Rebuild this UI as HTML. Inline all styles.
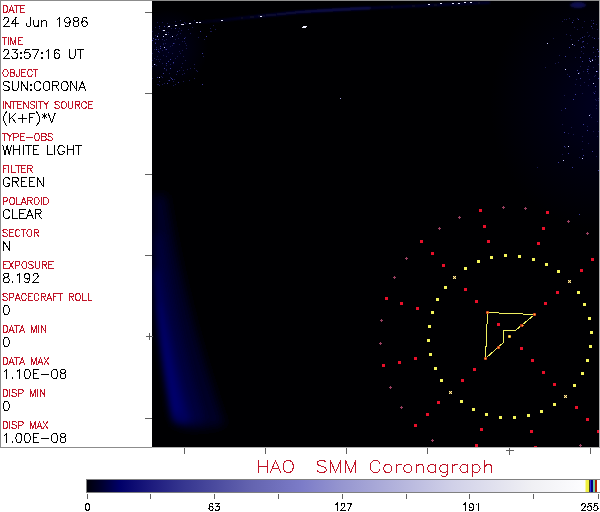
<!DOCTYPE html>
<html><head><meta charset="utf-8"><style>
html,body{margin:0;padding:0;background:#fff;width:600px;height:512px;overflow:hidden}
svg{display:block}
text{font-family:"Liberation Sans",sans-serif}
</style></head><body>
<svg width="600" height="512" viewBox="0 0 600 512" shape-rendering="crispEdges">

<defs>


<radialGradient id="rgL"><stop offset="0" stop-color="#00001e"/><stop offset="1" stop-color="#000002"/></radialGradient>
<radialGradient id="rgR"><stop offset="0" stop-color="#000020"/><stop offset="0.5" stop-color="#00000e"/><stop offset="1" stop-color="#000002"/></radialGradient>



<clipPath id="imgclip"><rect x="152" y="1" width="447" height="446"/></clipPath>
<filter id="blurS" filterUnits="userSpaceOnUse" x="152" y="1" width="447" height="446"><feGaussianBlur stdDeviation="3"/></filter>

<linearGradient id="cbar" x1="0" x2="1" y1="0" y2="0">
  <stop offset="0" stop-color="#00000a"/>
  <stop offset="0.03" stop-color="#000030"/>
  <stop offset="0.066" stop-color="#000069"/>
  <stop offset="0.127" stop-color="#1c1a7d"/>
  <stop offset="0.191" stop-color="#35358f"/>
  <stop offset="0.331" stop-color="#6464b0"/>
  <stop offset="0.432" stop-color="#7c7cc8"/>
  <stop offset="0.512" stop-color="#9696d0"/>
  <stop offset="0.733" stop-color="#d0d0e8"/>
  <stop offset="0.894" stop-color="#f0f0f4"/>
  <stop offset="1.0" stop-color="#fdfdff"/>
</linearGradient>
<filter id="blur1" filterUnits="userSpaceOnUse" x="152" y="1" width="447" height="446"><feGaussianBlur stdDeviation="1.2"/></filter>
<filter id="blurH" filterUnits="userSpaceOnUse" x="152" y="1" width="447" height="446"><feGaussianBlur stdDeviation="5"/></filter>
</defs>
<rect x="0" y="0" width="600" height="512" fill="#ffffff" />
<rect x="152" y="1" width="447" height="446" fill="#000002" />
<g shape-rendering="geometricPrecision" clip-path="url(#imgclip)">
<ellipse cx="168" cy="48" rx="40" ry="40" fill="url(#rgL)"/>
<ellipse cx="600" cy="105" rx="110" ry="125" fill="url(#rgR)"/>
</g>
<g shape-rendering="geometricPrecision" filter="url(#blurH)">
<path d="M152.0,195.0 152.0,200.0 152.0,205.0 152.1,210.0 152.2,215.0 152.3,220.0 152.4,225.0 152.5,230.0 152.7,235.0 152.8,240.0 153.0,245.0 153.3,250.0 153.5,255.0 153.8,260.0 154.0,265.0 154.3,270.0 154.7,275.0 155.0,280.0 155.4,285.0 155.8,290.0 156.2,295.0 156.6,300.0 157.0,305.0 157.5,310.0 158.0,315.0 158.5,320.0 159.0,325.0 159.6,330.0 160.2,335.0 160.7,340.0 161.4,345.0 162.0,350.0 162.6,355.0 163.3,360.0 164.0,365.0 164.7,370.0 165.5,375.0 166.2,380.0 167.0,385.0 167.8,390.0 168.6,395.0 169.5,400.0 170.3,405.0 171.2,410.0 172.1,415.0 173.1,420.0 174.0,425.0 199.7,429.0 224.8,425.0 223.1,420.0 221.3,415.0 219.6,410.0 217.9,405.0 216.3,400.0 214.6,395.0 213.0,390.0 211.4,385.0 209.8,380.0 208.3,375.0 206.7,370.0 205.2,365.0 203.7,360.0 202.2,355.0 200.8,350.0 199.4,345.0 197.9,340.0 196.6,335.0 195.2,330.0 193.8,325.0 192.5,320.0 191.2,315.0 189.9,310.0 188.6,305.0 187.4,300.0 186.2,295.0 185.0,290.0 183.8,285.0 182.6,280.0 181.5,275.0 180.3,270.0 179.2,265.0 178.2,260.0 177.1,255.0 176.1,250.0 175.0,245.0 174.0,240.0 173.1,235.0 172.1,230.0 171.2,225.0 170.3,220.0 169.4,215.0 168.5,210.0 167.6,205.0 166.8,200.0 166.0,195.0Z" fill="#000028" opacity="1"/>
<path d="M152.7,235.0 152.8,240.0 153.0,245.0 153.3,250.0 153.5,255.0 153.8,260.0 154.0,265.0 154.3,270.0 154.7,275.0 155.0,280.0 155.4,285.0 155.8,290.0 156.2,295.0 156.6,300.0 157.0,305.0 157.5,310.0 158.0,315.0 158.5,320.0 159.0,325.0 159.6,330.0 160.2,335.0 160.7,340.0 161.4,345.0 162.0,350.0 162.6,355.0 163.3,360.0 164.0,365.0 164.7,370.0 165.5,375.0 166.2,380.0 167.0,385.0 167.8,390.0 168.6,395.0 169.5,400.0 170.3,405.0 171.2,410.0 172.1,415.0 173.1,420.0 189.1,427.0 203.3,420.0 201.7,415.0 200.2,410.0 198.7,405.0 197.3,400.0 195.8,395.0 194.4,390.0 193.0,385.0 191.6,380.0 190.3,375.0 188.9,370.0 187.6,365.0 186.3,360.0 185.0,355.0 183.8,350.0 182.6,345.0 181.3,340.0 180.2,335.0 179.0,330.0 177.8,325.0 176.7,320.0 175.6,315.0 174.5,310.0 173.4,305.0 172.4,300.0 171.4,295.0 170.4,290.0 169.4,285.0 168.4,280.0 167.5,275.0 166.5,270.0 165.6,265.0 164.8,260.0 163.9,255.0 163.1,250.0 162.2,245.0 161.4,240.0 160.7,235.0Z" fill="#000040" opacity="1"/>
</g>
<g shape-rendering="geometricPrecision" filter="url(#blurS)">
<path d="M154.3,270.0 154.7,275.0 155.0,280.0 155.4,285.0 155.8,290.0 156.2,295.0 156.6,300.0 157.0,305.0 157.5,310.0 158.0,315.0 158.5,320.0 159.0,325.0 159.6,330.0 160.2,335.0 160.7,340.0 161.4,345.0 162.0,350.0 162.6,355.0 163.3,360.0 164.0,365.0 164.7,370.0 165.5,375.0 166.2,380.0 167.0,385.0 167.8,390.0 168.6,395.0 169.5,400.0 170.3,405.0 171.2,410.0 172.1,415.0 173.1,420.0 181.8,423.0 190.6,420.0 189.2,415.0 187.8,410.0 186.5,405.0 185.2,400.0 183.9,395.0 182.6,390.0 181.4,385.0 180.1,380.0 178.9,375.0 177.7,370.0 176.6,365.0 175.4,360.0 174.3,355.0 173.2,350.0 172.1,345.0 171.0,340.0 170.0,335.0 169.0,330.0 168.0,325.0 167.0,320.0 166.0,315.0 165.1,310.0 164.2,305.0 163.3,300.0 162.4,295.0 161.6,290.0 160.7,285.0 159.9,280.0 159.1,275.0 158.3,270.0Z" fill="#00005c" opacity="1"/>
<path d="M157.0,305.0 157.5,310.0 158.0,315.0 158.5,320.0 159.0,325.0 159.6,330.0 160.2,335.0 160.7,340.0 161.4,345.0 162.0,350.0 162.6,355.0 163.3,360.0 164.0,365.0 164.7,370.0 165.5,375.0 166.2,380.0 167.0,385.0 167.8,390.0 168.6,395.0 169.5,400.0 170.3,405.0 171.2,410.0 176.3,415.0 180.5,410.0 179.3,405.0 178.2,400.0 177.0,395.0 175.9,390.0 174.8,385.0 173.7,380.0 172.7,375.0 171.6,370.0 170.6,365.0 169.6,360.0 168.6,355.0 167.7,350.0 166.8,345.0 165.8,340.0 165.0,335.0 164.1,330.0 163.2,325.0 162.4,320.0 161.6,315.0 160.8,310.0 160.0,305.0Z" fill="#00006e" opacity="1"/>
</g>
<g filter="url(#blurH)" shape-rendering="geometricPrecision">
</g>
<g shape-rendering="geometricPrecision" filter="url(#blur1)">
<defs><linearGradient id="stk" gradientUnits="userSpaceOnUse" x1="180" y1="0" x2="320" y2="0"><stop offset="0" stop-color="#000010"/><stop offset="1" stop-color="#12126e"/></linearGradient></defs>
<path d="M170,25 C210,21.5 250,17 300,12 C330,10 350,9 370,8" stroke="url(#stk)" stroke-width="1.8" fill="none"/>
<path d="M370,8 C400,6.5 440,4.5 490,2.5" stroke="#0a0a48" stroke-width="1.6" fill="none"/>
<ellipse cx="578" cy="5" rx="8" ry="3" fill="#0c0c50"/>
</g>
<rect x="159" y="26" width="1" height="1" fill="#3a3a9a"/>
<rect x="166" y="32" width="1" height="1" fill="#18184e"/>
<rect x="183" y="24" width="1" height="1" fill="#3a3a9a"/>
<rect x="163" y="73" width="1" height="1" fill="#3a3a9a"/>
<rect x="176" y="35" width="1" height="1" fill="#18184e"/>
<rect x="167" y="27" width="1" height="1" fill="#18184e"/>
<rect x="213" y="25" width="1" height="1" fill="#18184e"/>
<rect x="198" y="37" width="1" height="1" fill="#18184e"/>
<rect x="160" y="59" width="1" height="1" fill="#18184e"/>
<rect x="163" y="43" width="1" height="1" fill="#3a3a9a"/>
<rect x="168" y="32" width="1" height="1" fill="#18184e"/>
<rect x="159" y="28" width="1" height="1" fill="#18184e"/>
<rect x="176" y="74" width="1" height="1" fill="#18184e"/>
<rect x="174" y="79" width="1" height="1" fill="#18184e"/>
<rect x="174" y="43" width="1" height="1" fill="#18184e"/>
<rect x="158" y="51" width="1" height="1" fill="#3a3a9a"/>
<rect x="162" y="63" width="1" height="1" fill="#18184e"/>
<rect x="183" y="56" width="1" height="1" fill="#18184e"/>
<rect x="182" y="41" width="1" height="1" fill="#18184e"/>
<rect x="166" y="39" width="1" height="1" fill="#18184e"/>
<rect x="215" y="29" width="1" height="1" fill="#18184e"/>
<rect x="185" y="60" width="1" height="1" fill="#18184e"/>
<rect x="171" y="78" width="1" height="1" fill="#3a3a9a"/>
<rect x="178" y="31" width="1" height="1" fill="#18184e"/>
<rect x="192" y="27" width="1" height="1" fill="#18184e"/>
<rect x="158" y="59" width="1" height="1" fill="#18184e"/>
<rect x="203" y="56" width="1" height="1" fill="#18184e"/>
<rect x="154" y="64" width="1" height="1" fill="#c8c8ff"/>
<rect x="168" y="34" width="1" height="1" fill="#18184e"/>
<rect x="156" y="47" width="1" height="1" fill="#18184e"/>
<rect x="166" y="70" width="1" height="1" fill="#18184e"/>
<rect x="167" y="83" width="1" height="1" fill="#3a3a9a"/>
<rect x="185" y="37" width="1" height="1" fill="#18184e"/>
<rect x="163" y="55" width="1" height="1" fill="#18184e"/>
<rect x="194" y="68" width="1" height="1" fill="#18184e"/>
<rect x="155" y="39" width="1" height="1" fill="#3a3a9a"/>
<rect x="175" y="21" width="1" height="1" fill="#18184e"/>
<rect x="185" y="43" width="1" height="1" fill="#18184e"/>
<rect x="181" y="67" width="1" height="1" fill="#18184e"/>
<rect x="152" y="60" width="1" height="1" fill="#18184e"/>
<rect x="164" y="26" width="1" height="1" fill="#18184e"/>
<rect x="183" y="70" width="1" height="1" fill="#18184e"/>
<rect x="177" y="71" width="1" height="1" fill="#3a3a9a"/>
<rect x="171" y="28" width="1" height="1" fill="#18184e"/>
<rect x="164" y="26" width="1" height="1" fill="#3a3a9a"/>
<rect x="156" y="39" width="1" height="1" fill="#18184e"/>
<rect x="188" y="29" width="1" height="1" fill="#18184e"/>
<rect x="164" y="68" width="1" height="1" fill="#3a3a9a"/>
<rect x="152" y="66" width="1" height="1" fill="#18184e"/>
<rect x="177" y="34" width="1" height="1" fill="#18184e"/>
<rect x="183" y="81" width="1" height="1" fill="#18184e"/>
<rect x="153" y="38" width="1" height="1" fill="#3a3a9a"/>
<rect x="164" y="40" width="1" height="1" fill="#18184e"/>
<rect x="170" y="46" width="1" height="1" fill="#18184e"/>
<rect x="167" y="23" width="1" height="1" fill="#18184e"/>
<rect x="154" y="58" width="1" height="1" fill="#18184e"/>
<rect x="180" y="53" width="1" height="1" fill="#18184e"/>
<rect x="184" y="41" width="1" height="1" fill="#18184e"/>
<rect x="157" y="84" width="1" height="1" fill="#18184e"/>
<rect x="186" y="48" width="1" height="1" fill="#18184e"/>
<rect x="163" y="44" width="1" height="1" fill="#18184e"/>
<rect x="197" y="71" width="1" height="1" fill="#18184e"/>
<rect x="156" y="65" width="1" height="1" fill="#18184e"/>
<rect x="185" y="23" width="1" height="1" fill="#18184e"/>
<rect x="170" y="64" width="1" height="1" fill="#18184e"/>
<rect x="155" y="64" width="1" height="1" fill="#18184e"/>
<rect x="165" y="49" width="1" height="1" fill="#18184e"/>
<rect x="166" y="63" width="1" height="1" fill="#3a3a9a"/>
<rect x="194" y="20" width="1" height="1" fill="#18184e"/>
<rect x="194" y="64" width="1" height="1" fill="#18184e"/>
<rect x="187" y="69" width="1" height="1" fill="#18184e"/>
<rect x="172" y="45" width="1" height="1" fill="#18184e"/>
<rect x="173" y="62" width="1" height="1" fill="#3a3a9a"/>
<rect x="196" y="70" width="1" height="1" fill="#18184e"/>
<rect x="152" y="40" width="1" height="1" fill="#3a3a9a"/>
<rect x="163" y="36" width="1" height="1" fill="#c8c8ff"/>
<rect x="178" y="38" width="1" height="1" fill="#18184e"/>
<rect x="168" y="80" width="1" height="1" fill="#18184e"/>
<rect x="172" y="36" width="1" height="1" fill="#c8c8ff"/>
<rect x="180" y="33" width="1" height="1" fill="#18184e"/>
<rect x="179" y="44" width="1" height="1" fill="#18184e"/>
<rect x="164" y="47" width="1" height="1" fill="#c8c8ff"/>
<rect x="159" y="61" width="1" height="1" fill="#18184e"/>
<rect x="184" y="73" width="1" height="1" fill="#18184e"/>
<rect x="194" y="78" width="1" height="1" fill="#18184e"/>
<rect x="169" y="73" width="1" height="1" fill="#18184e"/>
<rect x="162" y="39" width="1" height="1" fill="#18184e"/>
<rect x="162" y="22" width="1" height="1" fill="#18184e"/>
<rect x="158" y="39" width="1" height="1" fill="#3a3a9a"/>
<rect x="189" y="80" width="1" height="1" fill="#18184e"/>
<rect x="159" y="81" width="1" height="1" fill="#18184e"/>
<rect x="158" y="33" width="1" height="1" fill="#18184e"/>
<rect x="169" y="25" width="1" height="1" fill="#18184e"/>
<rect x="158" y="84" width="1" height="1" fill="#18184e"/>
<rect x="210" y="28" width="1" height="1" fill="#18184e"/>
<rect x="162" y="84" width="1" height="1" fill="#18184e"/>
<rect x="159" y="85" width="1" height="1" fill="#18184e"/>
<rect x="173" y="81" width="1" height="1" fill="#18184e"/>
<rect x="152" y="53" width="1" height="1" fill="#18184e"/>
<rect x="186" y="45" width="1" height="1" fill="#18184e"/>
<rect x="161" y="76" width="1" height="1" fill="#18184e"/>
<rect x="162" y="50" width="1" height="1" fill="#18184e"/>
<rect x="157" y="35" width="1" height="1" fill="#18184e"/>
<rect x="175" y="39" width="1" height="1" fill="#18184e"/>
<rect x="168" y="52" width="1" height="1" fill="#18184e"/>
<rect x="172" y="79" width="1" height="1" fill="#3a3a9a"/>
<rect x="178" y="82" width="1" height="1" fill="#3a3a9a"/>
<rect x="160" y="48" width="1" height="1" fill="#3a3a9a"/>
<rect x="182" y="63" width="1" height="1" fill="#18184e"/>
<rect x="166" y="65" width="1" height="1" fill="#18184e"/>
<rect x="152" y="78" width="1" height="1" fill="#18184e"/>
<rect x="157" y="22" width="1" height="1" fill="#18184e"/>
<rect x="175" y="28" width="1" height="1" fill="#3a3a9a"/>
<rect x="154" y="49" width="1" height="1" fill="#18184e"/>
<rect x="169" y="25" width="1" height="1" fill="#18184e"/>
<rect x="165" y="43" width="1" height="1" fill="#18184e"/>
<rect x="172" y="53" width="1" height="1" fill="#18184e"/>
<rect x="173" y="85" width="1" height="1" fill="#18184e"/>
<rect x="155" y="27" width="1" height="1" fill="#18184e"/>
<rect x="163" y="43" width="1" height="1" fill="#18184e"/>
<rect x="211" y="31" width="1" height="1" fill="#18184e"/>
<rect x="181" y="30" width="1" height="1" fill="#18184e"/>
<rect x="155" y="35" width="1" height="1" fill="#18184e"/>
<rect x="173" y="63" width="1" height="1" fill="#18184e"/>
<rect x="206" y="36" width="1" height="1" fill="#3a3a9a"/>
<rect x="182" y="50" width="1" height="1" fill="#18184e"/>
<rect x="173" y="43" width="1" height="1" fill="#3a3a9a"/>
<rect x="156" y="59" width="1" height="1" fill="#18184e"/>
<rect x="170" y="77" width="1" height="1" fill="#18184e"/>
<rect x="155" y="42" width="1" height="1" fill="#18184e"/>
<rect x="181" y="24" width="1" height="1" fill="#c8c8ff"/>
<rect x="169" y="80" width="1" height="1" fill="#3a3a9a"/>
<rect x="157" y="77" width="1" height="1" fill="#3a3a9a"/>
<rect x="164" y="83" width="1" height="1" fill="#18184e"/>
<rect x="179" y="70" width="1" height="1" fill="#18184e"/>
<rect x="158" y="49" width="1" height="1" fill="#18184e"/>
<rect x="170" y="37" width="1" height="1" fill="#18184e"/>
<rect x="157" y="36" width="1" height="1" fill="#c8c8ff"/>
<rect x="159" y="52" width="1" height="1" fill="#18184e"/>
<rect x="190" y="68" width="1" height="1" fill="#18184e"/>
<rect x="166" y="56" width="1" height="1" fill="#18184e"/>
<rect x="155" y="43" width="1" height="1" fill="#3a3a9a"/>
<rect x="159" y="77" width="1" height="1" fill="#c8c8ff"/>
<rect x="168" y="61" width="1" height="1" fill="#3a3a9a"/>
<rect x="170" y="59" width="1" height="1" fill="#3a3a9a"/>
<rect x="162" y="30" width="1" height="1" fill="#18184e"/>
<rect x="175" y="84" width="1" height="1" fill="#18184e"/>
<rect x="152" y="31" width="1" height="1" fill="#18184e"/>
<rect x="200" y="31" width="1" height="1" fill="#3a3a9a"/>
<rect x="175" y="58" width="1" height="1" fill="#18184e"/>
<rect x="166" y="49" width="1" height="1" fill="#3a3a9a"/>
<rect x="204" y="39" width="1" height="1" fill="#18184e"/>
<rect x="166" y="69" width="1" height="1" fill="#18184e"/>
<rect x="157" y="56" width="1" height="1" fill="#18184e"/>
<rect x="184" y="38" width="1" height="1" fill="#3a3a9a"/>
<rect x="182" y="74" width="1" height="1" fill="#18184e"/>
<rect x="202" y="84" width="1" height="1" fill="#3a3a9a"/>
<rect x="184" y="22" width="1" height="1" fill="#18184e"/>
<rect x="156" y="49" width="1" height="1" fill="#3a3a9a"/>
<rect x="190" y="33" width="1" height="1" fill="#18184e"/>
<rect x="162" y="77" width="1" height="1" fill="#18184e"/>
<rect x="179" y="51" width="1" height="1" fill="#18184e"/>
<rect x="180" y="20" width="1" height="1" fill="#18184e"/>
<rect x="210" y="31" width="1" height="1" fill="#18184e"/>
<rect x="179" y="28" width="1" height="1" fill="#18184e"/>
<rect x="202" y="53" width="1" height="1" fill="#3a3a9a"/>
<rect x="160" y="46" width="1" height="1" fill="#3a3a9a"/>
<rect x="170" y="68" width="1" height="1" fill="#3a3a9a"/>
<rect x="177" y="56" width="1" height="1" fill="#18184e"/>
<rect x="575" y="94" width="1" height="1" fill="#3a3a9a"/>
<rect x="588" y="66" width="1" height="1" fill="#18184e"/>
<rect x="589" y="115" width="1" height="1" fill="#c8c8ff"/>
<rect x="582" y="41" width="1" height="1" fill="#18184e"/>
<rect x="587" y="130" width="1" height="1" fill="#3a3a9a"/>
<rect x="574" y="27" width="1" height="1" fill="#18184e"/>
<rect x="564" y="132" width="1" height="1" fill="#3a3a9a"/>
<rect x="547" y="43" width="1" height="1" fill="#c8c8ff"/>
<rect x="559" y="55" width="1" height="1" fill="#18184e"/>
<rect x="582" y="37" width="1" height="1" fill="#3a3a9a"/>
<rect x="584" y="36" width="1" height="1" fill="#18184e"/>
<rect x="582" y="93" width="1" height="1" fill="#18184e"/>
<rect x="571" y="127" width="1" height="1" fill="#18184e"/>
<rect x="573" y="99" width="1" height="1" fill="#3a3a9a"/>
<rect x="578" y="73" width="1" height="1" fill="#c8c8ff"/>
<rect x="573" y="20" width="1" height="1" fill="#18184e"/>
<rect x="595" y="59" width="1" height="1" fill="#18184e"/>
<rect x="582" y="158" width="1" height="1" fill="#c8c8ff"/>
<rect x="598" y="170" width="1" height="1" fill="#3a3a9a"/>
<rect x="567" y="74" width="1" height="1" fill="#18184e"/>
<rect x="593" y="92" width="1" height="1" fill="#18184e"/>
<rect x="569" y="18" width="1" height="1" fill="#18184e"/>
<rect x="583" y="46" width="1" height="1" fill="#3a3a9a"/>
<rect x="565" y="108" width="1" height="1" fill="#3a3a9a"/>
<rect x="583" y="41" width="1" height="1" fill="#3a3a9a"/>
<rect x="584" y="21" width="1" height="1" fill="#18184e"/>
<rect x="555" y="63" width="1" height="1" fill="#18184e"/>
<rect x="565" y="147" width="1" height="1" fill="#18184e"/>
<rect x="565" y="56" width="1" height="1" fill="#3a3a9a"/>
<rect x="596" y="105" width="1" height="1" fill="#18184e"/>
<rect x="587" y="69" width="1" height="1" fill="#3a3a9a"/>
<rect x="588" y="36" width="1" height="1" fill="#18184e"/>
<rect x="588" y="73" width="1" height="1" fill="#18184e"/>
<rect x="582" y="27" width="1" height="1" fill="#18184e"/>
<rect x="590" y="114" width="1" height="1" fill="#18184e"/>
<rect x="592" y="59" width="1" height="1" fill="#3a3a9a"/>
<rect x="577" y="70" width="1" height="1" fill="#3a3a9a"/>
<rect x="537" y="167" width="1" height="1" fill="#18184e"/>
<rect x="589" y="58" width="1" height="1" fill="#3a3a9a"/>
<rect x="593" y="47" width="1" height="1" fill="#3a3a9a"/>
<rect x="597" y="121" width="1" height="1" fill="#18184e"/>
<rect x="598" y="100" width="1" height="1" fill="#18184e"/>
<rect x="577" y="29" width="1" height="1" fill="#18184e"/>
<rect x="582" y="42" width="1" height="1" fill="#18184e"/>
<rect x="580" y="85" width="1" height="1" fill="#18184e"/>
<rect x="589" y="60" width="1" height="1" fill="#3a3a9a"/>
<rect x="598" y="98" width="1" height="1" fill="#18184e"/>
<rect x="558" y="62" width="1" height="1" fill="#18184e"/>
<rect x="593" y="20" width="1" height="1" fill="#18184e"/>
<rect x="579" y="73" width="1" height="1" fill="#18184e"/>
<rect x="577" y="18" width="1" height="1" fill="#18184e"/>
<rect x="579" y="157" width="1" height="1" fill="#18184e"/>
<rect x="598" y="56" width="1" height="1" fill="#3a3a9a"/>
<rect x="566" y="34" width="1" height="1" fill="#18184e"/>
<rect x="593" y="131" width="1" height="1" fill="#18184e"/>
<rect x="572" y="44" width="1" height="1" fill="#c8c8ff"/>
<rect x="595" y="75" width="1" height="1" fill="#18184e"/>
<rect x="587" y="71" width="1" height="1" fill="#3a3a9a"/>
<rect x="598" y="131" width="1" height="1" fill="#18184e"/>
<rect x="592" y="37" width="1" height="1" fill="#18184e"/>
<rect x="580" y="57" width="1" height="1" fill="#3a3a9a"/>
<rect x="596" y="24" width="1" height="1" fill="#18184e"/>
<rect x="545" y="67" width="1" height="1" fill="#18184e"/>
<rect x="580" y="78" width="1" height="1" fill="#3a3a9a"/>
<rect x="593" y="83" width="1" height="1" fill="#c8c8ff"/>
<rect x="566" y="19" width="1" height="1" fill="#18184e"/>
<rect x="597" y="136" width="1" height="1" fill="#18184e"/>
<rect x="598" y="38" width="1" height="1" fill="#18184e"/>
<rect x="569" y="76" width="1" height="1" fill="#3a3a9a"/>
<rect x="588" y="143" width="1" height="1" fill="#18184e"/>
<rect x="583" y="155" width="1" height="1" fill="#3a3a9a"/>
<rect x="592" y="151" width="1" height="1" fill="#3a3a9a"/>
<rect x="574" y="45" width="1" height="1" fill="#3a3a9a"/>
<rect x="595" y="99" width="1" height="1" fill="#18184e"/>
<rect x="587" y="32" width="1" height="1" fill="#18184e"/>
<rect x="594" y="38" width="1" height="1" fill="#3a3a9a"/>
<rect x="562" y="124" width="1" height="1" fill="#18184e"/>
<rect x="581" y="47" width="1" height="1" fill="#3a3a9a"/>
<rect x="565" y="69" width="1" height="1" fill="#c8c8ff"/>
<rect x="588" y="85" width="1" height="1" fill="#18184e"/>
<rect x="592" y="60" width="1" height="1" fill="#c8c8ff"/>
<rect x="595" y="91" width="1" height="1" fill="#18184e"/>
<rect x="558" y="162" width="1" height="1" fill="#3a3a9a"/>
<rect x="573" y="134" width="1" height="1" fill="#18184e"/>
<rect x="592" y="28" width="1" height="1" fill="#18184e"/>
<rect x="564" y="146" width="1" height="1" fill="#3a3a9a"/>
<rect x="568" y="146" width="1" height="1" fill="#c8c8ff"/>
<rect x="564" y="95" width="1" height="1" fill="#18184e"/>
<rect x="593" y="23" width="1" height="1" fill="#3a3a9a"/>
<rect x="584" y="47" width="1" height="1" fill="#18184e"/>
<rect x="582" y="61" width="1" height="1" fill="#3a3a9a"/>
<rect x="569" y="47" width="1" height="1" fill="#3a3a9a"/>
<rect x="595" y="86" width="1" height="1" fill="#3a3a9a"/>
<rect x="562" y="21" width="1" height="1" fill="#18184e"/>
<rect x="563" y="160" width="1" height="1" fill="#c8c8ff"/>
<rect x="596" y="108" width="1" height="1" fill="#18184e"/>
<rect x="578" y="40" width="1" height="1" fill="#3a3a9a"/>
<rect x="575" y="57" width="1" height="1" fill="#18184e"/>
<rect x="582" y="149" width="1" height="1" fill="#18184e"/>
<rect x="582" y="141" width="1" height="1" fill="#18184e"/>
<rect x="589" y="79" width="1" height="1" fill="#18184e"/>
<rect x="597" y="49" width="1" height="1" fill="#3a3a9a"/>
<rect x="598" y="78" width="1" height="1" fill="#3a3a9a"/>
<rect x="571" y="39" width="1" height="1" fill="#18184e"/>
<rect x="553" y="38" width="1" height="1" fill="#18184e"/>
<rect x="598" y="51" width="1" height="1" fill="#3a3a9a"/>
<rect x="564" y="19" width="1" height="1" fill="#18184e"/>
<rect x="596" y="100" width="1" height="1" fill="#18184e"/>
<rect x="582" y="136" width="1" height="1" fill="#18184e"/>
<rect x="593" y="52" width="1" height="1" fill="#18184e"/>
<rect x="591" y="117" width="1" height="1" fill="#18184e"/>
<rect x="597" y="71" width="1" height="1" fill="#3a3a9a"/>
<rect x="598" y="64" width="1" height="1" fill="#18184e"/>
<rect x="581" y="51" width="1" height="1" fill="#18184e"/>
<rect x="572" y="22" width="1" height="1" fill="#3a3a9a"/>
<rect x="587" y="126" width="1" height="1" fill="#18184e"/>
<rect x="579" y="72" width="1" height="1" fill="#18184e"/>
<rect x="572" y="167" width="1" height="1" fill="#3a3a9a"/>
<rect x="595" y="56" width="1" height="1" fill="#3a3a9a"/>
<rect x="570" y="35" width="1" height="1" fill="#18184e"/>
<rect x="568" y="133" width="1" height="1" fill="#18184e"/>
<rect x="596" y="156" width="1" height="1" fill="#18184e"/>
<rect x="575" y="84" width="1" height="1" fill="#18184e"/>
<rect x="594" y="93" width="1" height="1" fill="#3a3a9a"/>
<rect x="594" y="76" width="1" height="1" fill="#18184e"/>
<rect x="590" y="61" width="1" height="1" fill="#c8c8ff"/>
<rect x="583" y="124" width="1" height="1" fill="#3a3a9a"/>
<rect x="593" y="67" width="1" height="1" fill="#18184e"/>
<rect x="591" y="26" width="1" height="1" fill="#3a3a9a"/>
<rect x="576" y="79" width="1" height="1" fill="#18184e"/>
<rect x="587" y="43" width="1" height="1" fill="#18184e"/>
<rect x="583" y="53" width="1" height="1" fill="#18184e"/>
<rect x="580" y="38" width="1" height="1" fill="#18184e"/>
<rect x="584" y="82" width="1" height="1" fill="#18184e"/>
<rect x="578" y="19" width="1" height="1" fill="#3a3a9a"/>
<rect x="596" y="71" width="1" height="1" fill="#c8c8ff"/>
<rect x="580" y="66" width="1" height="1" fill="#18184e"/>
<rect x="561" y="110" width="1" height="1" fill="#18184e"/>
<rect x="597" y="29" width="1" height="1" fill="#18184e"/>
<rect x="568" y="153" width="1" height="1" fill="#3a3a9a"/>
<rect x="583" y="71" width="1" height="1" fill="#18184e"/>
<rect x="588" y="69" width="1" height="1" fill="#18184e"/>
<rect x="589" y="35" width="1" height="1" fill="#18184e"/>
<rect x="579" y="214" width="1" height="1" fill="#3a3a9a"/>
<rect x="562" y="154" width="1" height="1" fill="#18184e"/>
<rect x="591" y="20" width="1" height="1" fill="#18184e"/>
<rect x="168" y="26" width="2" height="1" fill="#e8e8ff" />
<rect x="175" y="25" width="2" height="1" fill="#e8e8ff" />
<rect x="182" y="24" width="2" height="1" fill="#e8e8ff" />
<rect x="189" y="23" width="2" height="1" fill="#e8e8ff" />
<rect x="196" y="22" width="2" height="1" fill="#e8e8ff" />
<rect x="199" y="22" width="2" height="1" fill="#e8e8ff" />
<rect x="163" y="30" width="2" height="1" fill="#e8e8ff" />
<rect x="165" y="34" width="2" height="1" fill="#e8e8ff" />
<rect x="221" y="20" width="2" height="1" fill="#e8e8ff" />
<rect x="260" y="16" width="2" height="1" fill="#e8e8ff" />
<rect x="428" y="4" width="2" height="1" fill="#e8e8ff" />
<rect x="440" y="3" width="2" height="1" fill="#e8e8ff" />
<rect x="452" y="3" width="2" height="1" fill="#e8e8ff" />
<rect x="458" y="3" width="2" height="1" fill="#e8e8ff" />
<rect x="464" y="2" width="2" height="1" fill="#e8e8ff" />
<rect x="470" y="2" width="2" height="1" fill="#e8e8ff" />
<path d="M302,28 L303,26 L306,26 L307,27 L305,28 Z" fill="#f0f0ff"/>
<rect x="340" y="98" width="1" height="1" fill="#a0a0e0" />
<g clip-path="url(#imgclip)">
<rect x="589" y="345" width="3" height="3" fill="#f4f45a" />
<rect x="586" y="359" width="3" height="3" fill="#f4f45a" />
<rect x="581" y="372" width="3" height="3" fill="#f4f45a" />
<rect x="573" y="384" width="3" height="3" fill="#f4f45a" />
<rect x="564" y="395" width="3" height="3" fill="#8a6a30" />
<rect x="564" y="395" width="1" height="1" fill="#fff0a0" />
<rect x="566" y="395" width="1" height="1" fill="#fff0a0" />
<rect x="565" y="396" width="1" height="1" fill="#fff0a0" />
<rect x="564" y="397" width="1" height="1" fill="#fff0a0" />
<rect x="566" y="397" width="1" height="1" fill="#fff0a0" />
<rect x="553" y="403" width="3" height="3" fill="#f4f45a" />
<rect x="540" y="410" width="3" height="3" fill="#f4f45a" />
<rect x="527" y="414" width="3" height="3" fill="#f4f45a" />
<rect x="513" y="416" width="3" height="3" fill="#f4f45a" />
<rect x="499" y="416" width="3" height="3" fill="#f4f45a" />
<rect x="485" y="413" width="3" height="3" fill="#f4f45a" />
<rect x="472" y="408" width="3" height="3" fill="#f4f45a" />
<rect x="460" y="400" width="3" height="3" fill="#f4f45a" />
<rect x="449" y="391" width="3" height="3" fill="#8a6a30" />
<rect x="449" y="391" width="1" height="1" fill="#fff0a0" />
<rect x="451" y="391" width="1" height="1" fill="#fff0a0" />
<rect x="450" y="392" width="1" height="1" fill="#fff0a0" />
<rect x="449" y="393" width="1" height="1" fill="#fff0a0" />
<rect x="451" y="393" width="1" height="1" fill="#fff0a0" />
<rect x="440" y="379" width="3" height="3" fill="#f4f45a" />
<rect x="434" y="367" width="3" height="3" fill="#f4f45a" />
<rect x="429" y="353" width="3" height="3" fill="#f4f45a" />
<rect x="427" y="339" width="3" height="3" fill="#f4f45a" />
<rect x="428" y="325" width="3" height="3" fill="#f4f45a" />
<rect x="431" y="311" width="3" height="3" fill="#f4f45a" />
<rect x="436" y="298" width="3" height="3" fill="#f4f45a" />
<rect x="444" y="286" width="3" height="3" fill="#f4f45a" />
<rect x="453" y="276" width="3" height="3" fill="#8a6a30" />
<rect x="453" y="276" width="1" height="1" fill="#fff0a0" />
<rect x="455" y="276" width="1" height="1" fill="#fff0a0" />
<rect x="454" y="277" width="1" height="1" fill="#fff0a0" />
<rect x="453" y="278" width="1" height="1" fill="#fff0a0" />
<rect x="455" y="278" width="1" height="1" fill="#fff0a0" />
<rect x="464" y="267" width="3" height="3" fill="#f4f45a" />
<rect x="477" y="260" width="3" height="3" fill="#f4f45a" />
<rect x="490" y="256" width="3" height="3" fill="#f4f45a" />
<rect x="504" y="254" width="3" height="3" fill="#f4f45a" />
<rect x="518" y="255" width="3" height="3" fill="#f4f45a" />
<rect x="532" y="258" width="3" height="3" fill="#f4f45a" />
<rect x="545" y="263" width="3" height="3" fill="#f4f45a" />
<rect x="557" y="270" width="3" height="3" fill="#f4f45a" />
<rect x="568" y="280" width="3" height="3" fill="#8a6a30" />
<rect x="568" y="280" width="1" height="1" fill="#fff0a0" />
<rect x="570" y="280" width="1" height="1" fill="#fff0a0" />
<rect x="569" y="281" width="1" height="1" fill="#fff0a0" />
<rect x="568" y="282" width="1" height="1" fill="#fff0a0" />
<rect x="570" y="282" width="1" height="1" fill="#fff0a0" />
<rect x="577" y="291" width="3" height="3" fill="#f4f45a" />
<rect x="583" y="303" width="3" height="3" fill="#f4f45a" />
<rect x="588" y="317" width="3" height="3" fill="#f4f45a" />
<rect x="590" y="331" width="3" height="3" fill="#f4f45a" />
<rect x="520" y="347" width="3" height="3" fill="#e8102a" />
<rect x="531" y="359" width="3" height="3" fill="#e8102a" />
<rect x="542" y="371" width="3" height="3" fill="#e8102a" />
<rect x="553" y="383" width="3" height="3" fill="#e8102a" />
<rect x="575" y="406" width="3" height="3" fill="#e8102a" />
<rect x="586" y="418" width="3" height="3" fill="#e8102a" />
<rect x="597" y="430" width="3" height="3" fill="#e8102a" />
<rect x="530" y="430" width="3" height="3" fill="#e8102a" />
<rect x="534" y="446" width="3" height="3" fill="#e8102a" />
<rect x="480" y="428" width="3" height="3" fill="#e8102a" />
<rect x="475" y="444" width="3" height="3" fill="#e8102a" />
<rect x="473" y="368" width="3" height="3" fill="#e8102a" />
<rect x="461" y="379" width="3" height="3" fill="#e8102a" />
<rect x="437" y="401" width="3" height="3" fill="#e8102a" />
<rect x="426" y="413" width="3" height="3" fill="#e8102a" />
<rect x="414" y="424" width="3" height="3" fill="#e8102a" />
<rect x="414" y="357" width="3" height="3" fill="#e8102a" />
<rect x="398" y="361" width="3" height="3" fill="#e8102a" />
<rect x="382" y="364" width="3" height="3" fill="#e8102a" />
<rect x="416" y="307" width="3" height="3" fill="#e8102a" />
<rect x="400" y="302" width="3" height="3" fill="#e8102a" />
<rect x="385" y="297" width="3" height="3" fill="#e8102a" />
<rect x="497" y="323" width="3" height="3" fill="#e8102a" />
<rect x="475" y="300" width="3" height="3" fill="#e8102a" />
<rect x="464" y="288" width="3" height="3" fill="#e8102a" />
<rect x="442" y="264" width="3" height="3" fill="#e8102a" />
<rect x="431" y="252" width="3" height="3" fill="#e8102a" />
<rect x="420" y="240" width="3" height="3" fill="#e8102a" />
<rect x="487" y="240" width="3" height="3" fill="#e8102a" />
<rect x="483" y="225" width="3" height="3" fill="#e8102a" />
<rect x="479" y="209" width="3" height="3" fill="#e8102a" />
<rect x="537" y="242" width="3" height="3" fill="#e8102a" />
<rect x="542" y="227" width="3" height="3" fill="#e8102a" />
<rect x="546" y="211" width="3" height="3" fill="#e8102a" />
<rect x="544" y="302" width="3" height="3" fill="#e8102a" />
<rect x="556" y="291" width="3" height="3" fill="#e8102a" />
<rect x="580" y="269" width="3" height="3" fill="#e8102a" />
<rect x="591" y="258" width="3" height="3" fill="#e8102a" />
<rect x="579" y="445" width="3" height="1" fill="#9a4060" />
<rect x="580" y="444" width="1" height="3" fill="#9a4060" />
<rect x="431" y="440" width="3" height="1" fill="#9a4060" />
<rect x="432" y="439" width="1" height="3" fill="#9a4060" />
<rect x="400" y="407" width="3" height="1" fill="#9a4060" />
<rect x="401" y="406" width="1" height="3" fill="#9a4060" />
<rect x="389" y="387" width="3" height="1" fill="#9a4060" />
<rect x="390" y="386" width="1" height="3" fill="#9a4060" />
<rect x="379" y="343" width="3" height="1" fill="#9a4060" />
<rect x="380" y="342" width="1" height="3" fill="#9a4060" />
<rect x="380" y="320" width="3" height="1" fill="#9a4060" />
<rect x="381" y="319" width="1" height="3" fill="#9a4060" />
<rect x="393" y="277" width="3" height="1" fill="#9a4060" />
<rect x="394" y="276" width="1" height="3" fill="#9a4060" />
<rect x="405" y="258" width="3" height="1" fill="#9a4060" />
<rect x="406" y="257" width="1" height="3" fill="#9a4060" />
<rect x="438" y="228" width="3" height="1" fill="#9a4060" />
<rect x="439" y="227" width="1" height="3" fill="#9a4060" />
<rect x="458" y="217" width="3" height="1" fill="#9a4060" />
<rect x="459" y="216" width="1" height="3" fill="#9a4060" />
<rect x="502" y="207" width="3" height="1" fill="#9a4060" />
<rect x="503" y="206" width="1" height="3" fill="#9a4060" />
<rect x="524" y="208" width="3" height="1" fill="#9a4060" />
<rect x="525" y="207" width="1" height="3" fill="#9a4060" />
<rect x="567" y="221" width="3" height="1" fill="#9a4060" />
<rect x="568" y="220" width="1" height="3" fill="#9a4060" />
<rect x="586" y="233" width="3" height="1" fill="#9a4060" />
<rect x="587" y="232" width="1" height="3" fill="#9a4060" />
<polyline points="487.5,312.5 510.5,313.5 534.5,314.5 515.5,330.5 503.5,330.5 503.5,342.5 485.5,358.5 487.5,312.5" fill="none" stroke="#f0f060" stroke-width="1"/>
<rect x="486" y="311" width="3" height="3" fill="#a83018" />
<rect x="486" y="312" width="3" height="1" fill="#e06020" />
<rect x="487" y="311" width="1" height="3" fill="#e06020" />
<rect x="487" y="312" width="1" height="1" fill="#ffb040" />
<rect x="533" y="313" width="3" height="3" fill="#a83018" />
<rect x="533" y="314" width="3" height="1" fill="#e06020" />
<rect x="534" y="313" width="1" height="3" fill="#e06020" />
<rect x="534" y="314" width="1" height="1" fill="#ffb040" />
<rect x="484" y="357" width="3" height="3" fill="#a83018" />
<rect x="484" y="358" width="3" height="1" fill="#e06020" />
<rect x="485" y="357" width="1" height="3" fill="#e06020" />
<rect x="485" y="358" width="1" height="1" fill="#ffb040" />
<rect x="520" y="324" width="3" height="3" fill="#a83018" />
<rect x="521" y="325" width="3" height="1" fill="#e06020" />
<rect x="522" y="324" width="1" height="3" fill="#e06020" />
<rect x="522" y="325" width="1" height="1" fill="#ffb040" />
<rect x="497" y="346" width="3" height="3" fill="#a83018" />
<rect x="497" y="347" width="3" height="1" fill="#e06020" />
<rect x="498" y="346" width="1" height="3" fill="#e06020" />
<rect x="498" y="347" width="1" height="1" fill="#ffb040" />
<rect x="508" y="335" width="3" height="3" fill="#c08020" />
<rect x="508" y="336" width="3" height="1" fill="#f0c040" />
<rect x="509" y="335" width="1" height="3" fill="#f0c040" />
<rect x="509" y="336" width="1" height="1" fill="#ffff80" />
</g>
<rect x="184" y="448" width="1" height="6" fill="#606060" />
<rect x="265" y="448" width="1" height="6" fill="#606060" />
<rect x="346" y="448" width="1" height="6" fill="#606060" />
<rect x="427" y="448" width="1" height="6" fill="#606060" />
<rect x="590" y="448" width="1" height="6" fill="#606060" />
<rect x="145" y="12" width="7" height="1" fill="#606060" />
<rect x="145" y="93" width="7" height="1" fill="#606060" />
<rect x="145" y="174" width="7" height="1" fill="#606060" />
<rect x="145" y="255" width="7" height="1" fill="#606060" />
<rect x="145" y="418" width="7" height="1" fill="#606060" />
<rect x="506" y="450" width="8" height="1" fill="#606060" />
<rect x="509" y="448" width="1" height="7" fill="#606060" />
<rect x="146" y="336" width="7" height="1" fill="#606060" />
<rect x="149" y="333" width="1" height="7" fill="#606060" />
<rect x="0" y="0" width="600" height="1" fill="#8c8c8c" />
<rect x="0" y="0" width="1" height="448" fill="#8c8c8c" />
<rect x="0" y="447" width="152" height="1" fill="#8c8c8c" />
<rect x="152" y="447" width="447" height="1" fill="#b0b0b0" />
<rect x="599" y="0" width="1" height="448" fill="#a8a8a8" />
<rect x="86" y="479" width="514" height="14" fill="#808080" />
<rect x="87" y="480" width="498" height="12" fill="url(#cbar)" />
<rect x="585" y="480" width="1" height="12" fill="#f8f8a0" />
<rect x="586" y="480" width="3" height="12" fill="#f0f040" />
<rect x="589" y="480" width="1" height="12" fill="#404020" />
<rect x="590" y="480" width="1" height="12" fill="#3030e0" />
<rect x="591" y="480" width="2" height="12" fill="#000080" />
<rect x="593" y="480" width="2" height="12" fill="#70d0a0" />
<rect x="595" y="480" width="2" height="12" fill="#b02000" />
<rect x="597" y="480" width="3" height="12" fill="#ffffff" />
<rect x="87" y="494" width="1" height="5" fill="#606060" />
<rect x="150" y="494" width="1" height="5" fill="#606060" />
<rect x="214" y="494" width="1" height="5" fill="#606060" />
<rect x="278" y="494" width="1" height="5" fill="#606060" />
<rect x="342" y="494" width="1" height="5" fill="#606060" />
<rect x="406" y="494" width="1" height="5" fill="#606060" />
<rect x="469" y="494" width="1" height="5" fill="#606060" />
<rect x="533" y="494" width="1" height="5" fill="#606060" />
<rect x="598" y="494" width="1" height="5" fill="#606060" />
<path d="M3.27,5.50 3.27,12.50M3.27,5.50 5.47,5.50 6.42,5.83 7.05,6.50 7.37,7.17 7.68,8.17 7.68,9.83 7.37,10.83 7.05,11.50 6.42,12.17 5.47,12.50 3.27,12.50M11.46,5.50 8.94,12.50M11.46,5.50 13.98,12.50M9.88,10.17 13.04,10.17M16.81,5.50 16.81,12.50M14.61,5.50 19.02,5.50M20.59,5.50 20.59,12.50M20.59,5.50 24.69,5.50M20.59,8.83 23.12,8.83M20.59,12.50 24.69,12.50" fill="none" stroke="#c01428" stroke-width="1.0" stroke-linecap="square" stroke-linejoin="miter" shape-rendering="crispEdges"/>
<path d="M3.74,19.64 3.74,19.21 4.16,18.36 4.58,17.93 5.42,17.50 7.10,17.50 7.94,17.93 8.36,18.36 8.78,19.21 8.78,20.07 8.36,20.93 7.52,22.21 3.32,26.50 9.20,26.50M15.92,17.50 11.72,23.50 18.02,23.50M15.92,17.50 15.92,26.50M30.62,17.50 30.62,24.36 30.20,25.64 29.78,26.07 28.94,26.50 28.10,26.50 27.26,26.07 26.84,25.64 26.42,24.36 26.42,23.50M33.98,20.50 33.98,24.79 34.40,26.07 35.24,26.50 36.50,26.50 37.34,26.07 38.60,24.79M38.60,20.50 38.60,26.50M41.96,20.50 41.96,26.50M41.96,22.21 43.22,20.93 44.06,20.50 45.32,20.50 46.16,20.93 46.58,22.21 46.58,26.50M57.50,19.21 58.34,18.79 59.60,17.50 59.60,26.50M70.10,20.50 69.68,21.79 68.84,22.64 67.58,23.07 67.16,23.07 65.90,22.64 65.06,21.79 64.64,20.50 64.64,20.07 65.06,18.79 65.90,17.93 67.16,17.50 67.58,17.50 68.84,17.93 69.68,18.79 70.10,20.50 70.10,22.64 69.68,24.79 68.84,26.07 67.58,26.50 66.74,26.50 65.48,26.07 65.06,25.21M75.14,17.50 73.88,17.93 73.46,18.79 73.46,19.64 73.88,20.50 74.72,20.93 76.40,21.36 77.66,21.79 78.50,22.64 78.92,23.50 78.92,24.79 78.50,25.64 78.08,26.07 76.82,26.50 75.14,26.50 73.88,26.07 73.46,25.64 73.04,24.79 73.04,23.50 73.46,22.64 74.30,21.79 75.56,21.36 77.24,20.93 78.08,20.50 78.50,19.64 78.50,18.79 78.08,17.93 76.82,17.50 75.14,17.50M86.90,18.79 86.48,17.93 85.22,17.50 84.38,17.50 83.12,17.93 82.28,19.21 81.86,21.36 81.86,23.50 82.28,25.21 83.12,26.07 84.38,26.50 84.80,26.50 86.06,26.07 86.90,25.21 87.32,23.93 87.32,23.50 86.90,22.21 86.06,21.36 84.80,20.93 84.38,20.93 83.12,21.36 82.28,22.21 81.86,23.50" fill="none" stroke="#000" stroke-width="1.0" stroke-linecap="square" stroke-linejoin="miter" shape-rendering="crispEdges"/>
<path d="M4.53,37.50 4.53,44.50M2.32,37.50 6.73,37.50M8.31,37.50 8.31,44.50M10.83,37.50 10.83,44.50M10.83,37.50 13.35,44.50M15.87,37.50 13.35,44.50M15.87,37.50 15.87,44.50M18.39,37.50 18.39,44.50M18.39,37.50 22.48,37.50M18.39,40.83 20.91,40.83M18.39,44.50 22.48,44.50" fill="none" stroke="#c01428" stroke-width="1.0" stroke-linecap="square" stroke-linejoin="miter" shape-rendering="crispEdges"/>
<path d="M3.74,51.64 3.74,51.21 4.16,50.36 4.58,49.93 5.42,49.50 7.10,49.50 7.94,49.93 8.36,50.36 8.78,51.21 8.78,52.07 8.36,52.93 7.52,54.21 3.32,58.50 9.20,58.50M12.56,49.50 17.18,49.50 14.66,52.93 15.92,52.93 16.76,53.36 17.18,53.79 17.60,55.07 17.60,55.93 17.18,57.21 16.34,58.07 15.08,58.50 13.82,58.50 12.56,58.07 12.14,57.64 11.72,56.79M20.96,52.50 20.54,52.93 20.96,53.36 21.38,52.93 20.96,52.50M20.96,57.64 20.54,58.07 20.96,58.50 21.38,58.07 20.96,57.64M29.36,49.50 25.16,49.50 24.74,53.36 25.16,52.93 26.42,52.50 27.68,52.50 28.94,52.93 29.78,53.79 30.20,55.07 30.20,55.93 29.78,57.21 28.94,58.07 27.68,58.50 26.42,58.50 25.16,58.07 24.74,57.64 24.32,56.79M38.60,49.50 34.40,58.50M32.72,49.50 38.60,49.50M41.96,52.50 41.54,52.93 41.96,53.36 42.38,52.93 41.96,52.50M41.96,57.64 41.54,58.07 41.96,58.50 42.38,58.07 41.96,57.64M46.58,51.21 47.42,50.79 48.68,49.50 48.68,58.50M59.18,50.79 58.76,49.93 57.50,49.50 56.66,49.50 55.40,49.93 54.56,51.21 54.14,53.36 54.14,55.50 54.56,57.21 55.40,58.07 56.66,58.50 57.08,58.50 58.34,58.07 59.18,57.21 59.60,55.93 59.60,55.50 59.18,54.21 58.34,53.36 57.08,52.93 56.66,52.93 55.40,53.36 54.56,54.21 54.14,55.50M69.26,49.50 69.26,55.93 69.68,57.21 70.52,58.07 71.78,58.50 72.62,58.50 73.88,58.07 74.72,57.21 75.14,55.93 75.14,49.50M80.18,49.50 80.18,58.50M77.24,49.50 83.12,49.50" fill="none" stroke="#000" stroke-width="1.0" stroke-linecap="square" stroke-linejoin="miter" shape-rendering="crispEdges"/>
<path d="M4.84,69.50 4.21,69.83 3.58,70.50 3.27,71.17 2.96,72.17 2.96,73.83 3.27,74.83 3.58,75.50 4.21,76.17 4.84,76.50 6.10,76.50 6.73,76.17 7.37,75.50 7.68,74.83 8.00,73.83 8.00,72.17 7.68,71.17 7.37,70.50 6.73,69.83 6.10,69.50 4.84,69.50M10.20,69.50 10.20,76.50M10.20,69.50 13.04,69.50 13.98,69.83 14.29,70.17 14.61,70.83 14.61,71.50 14.29,72.17 13.98,72.50 13.04,72.83M10.20,72.83 13.04,72.83 13.98,73.17 14.29,73.50 14.61,74.17 14.61,75.17 14.29,75.83 13.98,76.17 13.04,76.50 10.20,76.50M19.34,69.50 19.34,74.83 19.02,75.83 18.70,76.17 18.08,76.50 17.45,76.50 16.81,76.17 16.50,75.83 16.19,74.83 16.19,74.17M21.85,69.50 21.85,76.50M21.85,69.50 25.95,69.50M21.85,72.83 24.38,72.83M21.85,76.50 25.95,76.50M32.25,71.17 31.94,70.50 31.30,69.83 30.67,69.50 29.41,69.50 28.78,69.83 28.16,70.50 27.84,71.17 27.52,72.17 27.52,73.83 27.84,74.83 28.16,75.50 28.78,76.17 29.41,76.50 30.67,76.50 31.30,76.17 31.94,75.50 32.25,74.83M35.71,69.50 35.71,76.50M33.51,69.50 37.92,69.50" fill="none" stroke="#c01428" stroke-width="1.0" stroke-linecap="square" stroke-linejoin="miter" shape-rendering="crispEdges"/>
<path d="M9.20,82.79 8.36,81.93 7.10,81.50 5.42,81.50 4.16,81.93 3.32,82.79 3.32,83.64 3.74,84.50 4.16,84.93 5.00,85.36 7.52,86.21 8.36,86.64 8.78,87.07 9.20,87.93 9.20,89.21 8.36,90.07 7.10,90.50 5.42,90.50 4.16,90.07 3.32,89.21M12.14,81.50 12.14,87.93 12.56,89.21 13.40,90.07 14.66,90.50 15.50,90.50 16.76,90.07 17.60,89.21 18.02,87.93 18.02,81.50M21.38,81.50 21.38,90.50M21.38,81.50 27.26,90.50M27.26,81.50 27.26,90.50M31.04,84.50 30.62,84.93 31.04,85.36 31.46,84.93 31.04,84.50M31.04,89.64 30.62,90.07 31.04,90.50 31.46,90.07 31.04,89.64M40.70,83.64 40.28,82.79 39.44,81.93 38.60,81.50 36.92,81.50 36.08,81.93 35.24,82.79 34.82,83.64 34.40,84.93 34.40,87.07 34.82,88.36 35.24,89.21 36.08,90.07 36.92,90.50 38.60,90.50 39.44,90.07 40.28,89.21 40.70,88.36M45.74,81.50 44.90,81.93 44.06,82.79 43.64,83.64 43.22,84.93 43.22,87.07 43.64,88.36 44.06,89.21 44.90,90.07 45.74,90.50 47.42,90.50 48.26,90.07 49.10,89.21 49.52,88.36 49.94,87.07 49.94,84.93 49.52,83.64 49.10,82.79 48.26,81.93 47.42,81.50 45.74,81.50M52.88,81.50 52.88,90.50M52.88,81.50 56.66,81.50 57.92,81.93 58.34,82.36 58.76,83.21 58.76,84.07 58.34,84.93 57.92,85.36 56.66,85.79 52.88,85.79M55.82,85.79 58.76,90.50M63.80,81.50 62.96,81.93 62.12,82.79 61.70,83.64 61.28,84.93 61.28,87.07 61.70,88.36 62.12,89.21 62.96,90.07 63.80,90.50 65.48,90.50 66.32,90.07 67.16,89.21 67.58,88.36 68.00,87.07 68.00,84.93 67.58,83.64 67.16,82.79 66.32,81.93 65.48,81.50 63.80,81.50M70.94,81.50 70.94,90.50M70.94,81.50 76.82,90.50M76.82,81.50 76.82,90.50M82.28,81.50 78.92,90.50M82.28,81.50 85.64,90.50M80.18,87.50 84.38,87.50" fill="none" stroke="#000" stroke-width="1.0" stroke-linecap="square" stroke-linejoin="miter" shape-rendering="crispEdges"/>
<path d="M3.27,101.50 3.27,108.50M5.79,101.50 5.79,108.50M5.79,101.50 10.20,108.50M10.20,101.50 10.20,108.50M13.98,101.50 13.98,108.50M11.78,101.50 16.19,101.50M17.76,101.50 17.76,108.50M17.76,101.50 21.85,101.50M17.76,104.83 20.28,104.83M17.76,108.50 21.85,108.50M23.74,101.50 23.74,108.50M23.74,101.50 28.16,108.50M28.16,101.50 28.16,108.50M34.77,102.50 34.14,101.83 33.20,101.50 31.94,101.50 30.99,101.83 30.36,102.50 30.36,103.17 30.67,103.83 30.99,104.17 31.62,104.50 33.51,105.17 34.14,105.50 34.45,105.83 34.77,106.50 34.77,107.50 34.14,108.17 33.20,108.50 31.94,108.50 30.99,108.17 30.36,107.50M36.98,101.50 36.98,108.50M40.75,101.50 40.75,108.50M38.55,101.50 42.96,101.50M43.59,101.50 46.11,104.83 46.11,108.50M48.63,101.50 46.11,104.83M59.34,102.50 58.71,101.83 57.77,101.50 56.50,101.50 55.56,101.83 54.93,102.50 54.93,103.17 55.24,103.83 55.56,104.17 56.19,104.50 58.08,105.17 58.71,105.50 59.02,105.83 59.34,106.50 59.34,107.50 58.71,108.17 57.77,108.50 56.50,108.50 55.56,108.17 54.93,107.50M63.12,101.50 62.49,101.83 61.86,102.50 61.55,103.17 61.23,104.17 61.23,105.83 61.55,106.83 61.86,107.50 62.49,108.17 63.12,108.50 64.38,108.50 65.01,108.17 65.64,107.50 65.95,106.83 66.27,105.83 66.27,104.17 65.95,103.17 65.64,102.50 65.01,101.83 64.38,101.50 63.12,101.50M68.48,101.50 68.48,106.50 68.79,107.50 69.42,108.17 70.37,108.50 71.00,108.50 71.94,108.17 72.57,107.50 72.89,106.50 72.89,101.50M75.41,101.50 75.41,108.50M75.41,101.50 78.24,101.50 79.19,101.83 79.50,102.17 79.82,102.83 79.82,103.50 79.50,104.17 79.19,104.50 78.24,104.83 75.41,104.83M77.61,104.83 79.82,108.50M86.43,103.17 86.12,102.50 85.48,101.83 84.86,101.50 83.59,101.50 82.97,101.83 82.34,102.50 82.02,103.17 81.71,104.17 81.71,105.83 82.02,106.83 82.34,107.50 82.97,108.17 83.59,108.50 84.86,108.50 85.48,108.17 86.12,107.50 86.43,106.83M88.64,101.50 88.64,108.50M88.64,101.50 92.73,101.50M88.64,104.83 91.16,104.83M88.64,108.50 92.73,108.50" fill="none" stroke="#c01428" stroke-width="1.0" stroke-linecap="square" stroke-linejoin="miter" shape-rendering="crispEdges"/>
<path d="M6.68,111.79 5.84,112.64 5.00,113.93 4.16,115.64 3.74,117.79 3.74,119.50 4.16,121.64 5.00,123.36 5.84,124.64 6.68,125.50M9.62,113.50 9.62,122.50M15.50,113.50 9.62,119.50M11.72,117.36 15.50,122.50M22.22,114.79 22.22,122.50M18.44,118.64 26.00,118.64M29.36,113.50 29.36,122.50M29.36,113.50 34.82,113.50M29.36,117.79 32.72,117.79M36.50,111.79 37.34,112.64 38.18,113.93 39.02,115.64 39.44,117.79 39.44,119.50 39.02,121.64 38.18,123.36 37.34,124.64 36.50,125.50M44.48,113.50 44.48,118.64M42.38,114.79 46.58,117.36M46.58,114.79 42.38,117.36M48.26,113.50 51.62,122.50M54.98,113.50 51.62,122.50" fill="none" stroke="#000" stroke-width="1.0" stroke-linecap="square" stroke-linejoin="miter" shape-rendering="crispEdges"/>
<path d="M4.53,133.50 4.53,140.50M2.32,133.50 6.73,133.50M7.37,133.50 9.88,136.83 9.88,140.50M12.40,133.50 9.88,136.83M13.98,133.50 13.98,140.50M13.98,133.50 16.81,133.50 17.76,133.83 18.08,134.17 18.39,134.83 18.39,135.83 18.08,136.50 17.76,136.83 16.81,137.17 13.98,137.17M20.59,133.50 20.59,140.50M20.59,133.50 24.69,133.50M20.59,136.83 23.12,136.83M20.59,140.50 24.69,140.50M26.58,137.50 32.25,137.50M36.34,133.50 35.71,133.83 35.09,134.50 34.77,135.17 34.45,136.17 34.45,137.83 34.77,138.83 35.09,139.50 35.71,140.17 36.34,140.50 37.60,140.50 38.23,140.17 38.86,139.50 39.18,138.83 39.49,137.83 39.49,136.17 39.18,135.17 38.86,134.50 38.23,133.83 37.60,133.50 36.34,133.50M41.70,133.50 41.70,140.50M41.70,133.50 44.53,133.50 45.48,133.83 45.80,134.17 46.11,134.83 46.11,135.50 45.80,136.17 45.48,136.50 44.53,136.83M41.70,136.83 44.53,136.83 45.48,137.17 45.80,137.50 46.11,138.17 46.11,139.17 45.80,139.83 45.48,140.17 44.53,140.50 41.70,140.50M52.41,134.50 51.78,133.83 50.84,133.50 49.57,133.50 48.63,133.83 48.00,134.50 48.00,135.17 48.31,135.83 48.63,136.17 49.26,136.50 51.15,137.17 51.78,137.50 52.09,137.83 52.41,138.50 52.41,139.50 51.78,140.17 50.84,140.50 49.57,140.50 48.63,140.17 48.00,139.50" fill="none" stroke="#c01428" stroke-width="1.0" stroke-linecap="square" stroke-linejoin="miter" shape-rendering="crispEdges"/>
<path d="M2.90,145.50 5.00,154.50M7.10,145.50 5.00,154.50M7.10,145.50 9.20,154.50M11.30,145.50 9.20,154.50M13.82,145.50 13.82,154.50M19.70,145.50 19.70,154.50M13.82,149.79 19.70,149.79M23.06,145.50 23.06,154.50M28.10,145.50 28.10,154.50M25.16,145.50 31.04,145.50M33.14,145.50 33.14,154.50M33.14,145.50 38.60,145.50M33.14,149.79 36.50,149.79M33.14,154.50 38.60,154.50M47.84,145.50 47.84,154.50M47.84,154.50 52.88,154.50M54.98,145.50 54.98,154.50M64.22,147.64 63.80,146.79 62.96,145.93 62.12,145.50 60.44,145.50 59.60,145.93 58.76,146.79 58.34,147.64 57.92,148.93 57.92,151.07 58.34,152.36 58.76,153.21 59.60,154.07 60.44,154.50 62.12,154.50 62.96,154.07 63.80,153.21 64.22,152.36 64.22,151.07M62.12,151.07 64.22,151.07M67.16,145.50 67.16,154.50M73.04,145.50 73.04,154.50M67.16,149.79 73.04,149.79M78.08,145.50 78.08,154.50M75.14,145.50 81.02,145.50" fill="none" stroke="#000" stroke-width="1.0" stroke-linecap="square" stroke-linejoin="miter" shape-rendering="crispEdges"/>
<path d="M3.27,165.50 3.27,172.50M3.27,165.50 7.37,165.50M3.27,168.83 5.79,168.83M8.94,165.50 8.94,172.50M11.46,165.50 11.46,172.50M11.46,172.50 15.24,172.50M18.08,165.50 18.08,172.50M15.87,165.50 20.28,165.50M21.85,165.50 21.85,172.50M21.85,165.50 25.95,165.50M21.85,168.83 24.38,168.83M21.85,172.50 25.95,172.50M27.84,165.50 27.84,172.50M27.84,165.50 30.67,165.50 31.62,165.83 31.94,166.17 32.25,166.83 32.25,167.50 31.94,168.17 31.62,168.50 30.67,168.83 27.84,168.83M30.05,168.83 32.25,172.50" fill="none" stroke="#c01428" stroke-width="1.0" stroke-linecap="square" stroke-linejoin="miter" shape-rendering="crispEdges"/>
<path d="M9.62,179.64 9.20,178.79 8.36,177.93 7.52,177.50 5.84,177.50 5.00,177.93 4.16,178.79 3.74,179.64 3.32,180.93 3.32,183.07 3.74,184.36 4.16,185.21 5.00,186.07 5.84,186.50 7.52,186.50 8.36,186.07 9.20,185.21 9.62,184.36 9.62,183.07M7.52,183.07 9.62,183.07M12.56,177.50 12.56,186.50M12.56,177.50 16.34,177.50 17.60,177.93 18.02,178.36 18.44,179.21 18.44,180.07 18.02,180.93 17.60,181.36 16.34,181.79 12.56,181.79M15.50,181.79 18.44,186.50M21.38,177.50 21.38,186.50M21.38,177.50 26.84,177.50M21.38,181.79 24.74,181.79M21.38,186.50 26.84,186.50M29.36,177.50 29.36,186.50M29.36,177.50 34.82,177.50M29.36,181.79 32.72,181.79M29.36,186.50 34.82,186.50M37.34,177.50 37.34,186.50M37.34,177.50 43.22,186.50M43.22,177.50 43.22,186.50" fill="none" stroke="#000" stroke-width="1.0" stroke-linecap="square" stroke-linejoin="miter" shape-rendering="crispEdges"/>
<path d="M3.27,197.50 3.27,204.50M3.27,197.50 6.10,197.50 7.05,197.83 7.37,198.17 7.68,198.83 7.68,199.83 7.37,200.50 7.05,200.83 6.10,201.17 3.27,201.17M11.46,197.50 10.83,197.83 10.20,198.50 9.88,199.17 9.57,200.17 9.57,201.83 9.88,202.83 10.20,203.50 10.83,204.17 11.46,204.50 12.72,204.50 13.35,204.17 13.98,203.50 14.29,202.83 14.61,201.83 14.61,200.17 14.29,199.17 13.98,198.50 13.35,197.83 12.72,197.50 11.46,197.50M16.81,197.50 16.81,204.50M16.81,204.50 20.59,204.50M23.74,197.50 21.23,204.50M23.74,197.50 26.27,204.50M22.17,202.17 25.32,202.17M27.84,197.50 27.84,204.50M27.84,197.50 30.67,197.50 31.62,197.83 31.94,198.17 32.25,198.83 32.25,199.50 31.94,200.17 31.62,200.50 30.67,200.83 27.84,200.83M30.05,200.83 32.25,204.50M36.03,197.50 35.40,197.83 34.77,198.50 34.45,199.17 34.14,200.17 34.14,201.83 34.45,202.83 34.77,203.50 35.40,204.17 36.03,204.50 37.29,204.50 37.92,204.17 38.55,203.50 38.86,202.83 39.18,201.83 39.18,200.17 38.86,199.17 38.55,198.50 37.92,197.83 37.29,197.50 36.03,197.50M41.38,197.50 41.38,204.50M43.91,197.50 43.91,204.50M43.91,197.50 46.11,197.50 47.05,197.83 47.68,198.50 48.00,199.17 48.31,200.17 48.31,201.83 48.00,202.83 47.68,203.50 47.05,204.17 46.11,204.50 43.91,204.50" fill="none" stroke="#c01428" stroke-width="1.0" stroke-linecap="square" stroke-linejoin="miter" shape-rendering="crispEdges"/>
<path d="M9.62,211.64 9.20,210.79 8.36,209.93 7.52,209.50 5.84,209.50 5.00,209.93 4.16,210.79 3.74,211.64 3.32,212.93 3.32,215.07 3.74,216.36 4.16,217.21 5.00,218.07 5.84,218.50 7.52,218.50 8.36,218.07 9.20,217.21 9.62,216.36M12.56,209.50 12.56,218.50M12.56,218.50 17.60,218.50M19.70,209.50 19.70,218.50M19.70,209.50 25.16,209.50M19.70,213.79 23.06,213.79M19.70,218.50 25.16,218.50M29.78,209.50 26.42,218.50M29.78,209.50 33.14,218.50M27.68,215.50 31.88,215.50M35.24,209.50 35.24,218.50M35.24,209.50 39.02,209.50 40.28,209.93 40.70,210.36 41.12,211.21 41.12,212.07 40.70,212.93 40.28,213.36 39.02,213.79 35.24,213.79M38.18,213.79 41.12,218.50" fill="none" stroke="#000" stroke-width="1.0" stroke-linecap="square" stroke-linejoin="miter" shape-rendering="crispEdges"/>
<path d="M7.37,230.50 6.73,229.83 5.79,229.50 4.53,229.50 3.58,229.83 2.96,230.50 2.96,231.17 3.27,231.83 3.58,232.17 4.21,232.50 6.10,233.17 6.73,233.50 7.05,233.83 7.37,234.50 7.37,235.50 6.73,236.17 5.79,236.50 4.53,236.50 3.58,236.17 2.96,235.50M9.57,229.50 9.57,236.50M9.57,229.50 13.66,229.50M9.57,232.83 12.09,232.83M9.57,236.50 13.66,236.50M19.97,231.17 19.65,230.50 19.02,229.83 18.39,229.50 17.13,229.50 16.50,229.83 15.87,230.50 15.55,231.17 15.24,232.17 15.24,233.83 15.55,234.83 15.87,235.50 16.50,236.17 17.13,236.50 18.39,236.50 19.02,236.17 19.65,235.50 19.97,234.83M23.43,229.50 23.43,236.50M21.23,229.50 25.63,229.50M28.78,229.50 28.16,229.83 27.52,230.50 27.21,231.17 26.90,232.17 26.90,233.83 27.21,234.83 27.52,235.50 28.16,236.17 28.78,236.50 30.05,236.50 30.67,236.17 31.30,235.50 31.62,234.83 31.94,233.83 31.94,232.17 31.62,231.17 31.30,230.50 30.67,229.83 30.05,229.50 28.78,229.50M34.14,229.50 34.14,236.50M34.14,229.50 36.98,229.50 37.92,229.83 38.23,230.17 38.55,230.83 38.55,231.50 38.23,232.17 37.92,232.50 36.98,232.83 34.14,232.83M36.34,232.83 38.55,236.50" fill="none" stroke="#c01428" stroke-width="1.0" stroke-linecap="square" stroke-linejoin="miter" shape-rendering="crispEdges"/>
<path d="M3.74,241.50 3.74,250.50M3.74,241.50 9.62,250.50M9.62,241.50 9.62,250.50" fill="none" stroke="#000" stroke-width="1.0" stroke-linecap="square" stroke-linejoin="miter" shape-rendering="crispEdges"/>
<path d="M3.27,261.50 3.27,268.50M3.27,261.50 7.37,261.50M3.27,264.83 5.79,264.83M3.27,268.50 7.37,268.50M8.94,261.50 13.35,268.50M13.35,261.50 8.94,268.50M15.55,261.50 15.55,268.50M15.55,261.50 18.39,261.50 19.34,261.83 19.65,262.17 19.97,262.83 19.97,263.83 19.65,264.50 19.34,264.83 18.39,265.17 15.55,265.17M23.74,261.50 23.12,261.83 22.48,262.50 22.17,263.17 21.85,264.17 21.85,265.83 22.17,266.83 22.48,267.50 23.12,268.17 23.74,268.50 25.01,268.50 25.63,268.17 26.27,267.50 26.58,266.83 26.90,265.83 26.90,264.17 26.58,263.17 26.27,262.50 25.63,261.83 25.01,261.50 23.74,261.50M33.20,262.50 32.56,261.83 31.62,261.50 30.36,261.50 29.41,261.83 28.78,262.50 28.78,263.17 29.10,263.83 29.41,264.17 30.05,264.50 31.94,265.17 32.56,265.50 32.88,265.83 33.20,266.50 33.20,267.50 32.56,268.17 31.62,268.50 30.36,268.50 29.41,268.17 28.78,267.50M35.40,261.50 35.40,266.50 35.71,267.50 36.34,268.17 37.29,268.50 37.92,268.50 38.86,268.17 39.49,267.50 39.81,266.50 39.81,261.50M42.33,261.50 42.33,268.50M42.33,261.50 45.16,261.50 46.11,261.83 46.42,262.17 46.74,262.83 46.74,263.50 46.42,264.17 46.11,264.50 45.16,264.83 42.33,264.83M44.53,264.83 46.74,268.50M48.95,261.50 48.95,268.50M48.95,261.50 53.04,261.50M48.95,264.83 51.46,264.83M48.95,268.50 53.04,268.50" fill="none" stroke="#c01428" stroke-width="1.0" stroke-linecap="square" stroke-linejoin="miter" shape-rendering="crispEdges"/>
<path d="M5.42,273.50 4.16,273.93 3.74,274.79 3.74,275.64 4.16,276.50 5.00,276.93 6.68,277.36 7.94,277.79 8.78,278.64 9.20,279.50 9.20,280.79 8.78,281.64 8.36,282.07 7.10,282.50 5.42,282.50 4.16,282.07 3.74,281.64 3.32,280.79 3.32,279.50 3.74,278.64 4.58,277.79 5.84,277.36 7.52,276.93 8.36,276.50 8.78,275.64 8.78,274.79 8.36,273.93 7.10,273.50 5.42,273.50M12.56,281.64 12.14,282.07 12.56,282.50 12.98,282.07 12.56,281.64M17.18,275.21 18.02,274.79 19.28,273.50 19.28,282.50M29.78,276.50 29.36,277.79 28.52,278.64 27.26,279.07 26.84,279.07 25.58,278.64 24.74,277.79 24.32,276.50 24.32,276.07 24.74,274.79 25.58,273.93 26.84,273.50 27.26,273.50 28.52,273.93 29.36,274.79 29.78,276.50 29.78,278.64 29.36,280.79 28.52,282.07 27.26,282.50 26.42,282.50 25.16,282.07 24.74,281.21M33.14,275.64 33.14,275.21 33.56,274.36 33.98,273.93 34.82,273.50 36.50,273.50 37.34,273.93 37.76,274.36 38.18,275.21 38.18,276.07 37.76,276.93 36.92,278.21 32.72,282.50 38.60,282.50" fill="none" stroke="#000" stroke-width="1.0" stroke-linecap="square" stroke-linejoin="miter" shape-rendering="crispEdges"/>
<path d="M7.37,294.50 6.73,293.83 5.79,293.50 4.53,293.50 3.58,293.83 2.96,294.50 2.96,295.17 3.27,295.83 3.58,296.17 4.21,296.50 6.10,297.17 6.73,297.50 7.05,297.83 7.37,298.50 7.37,299.50 6.73,300.17 5.79,300.50 4.53,300.50 3.58,300.17 2.96,299.50M9.57,293.50 9.57,300.50M9.57,293.50 12.40,293.50 13.35,293.83 13.66,294.17 13.98,294.83 13.98,295.83 13.66,296.50 13.35,296.83 12.40,297.17 9.57,297.17M17.76,293.50 15.24,300.50M17.76,293.50 20.28,300.50M16.19,298.17 19.34,298.17M26.27,295.17 25.95,294.50 25.32,293.83 24.69,293.50 23.43,293.50 22.80,293.83 22.17,294.50 21.85,295.17 21.54,296.17 21.54,297.83 21.85,298.83 22.17,299.50 22.80,300.17 23.43,300.50 24.69,300.50 25.32,300.17 25.95,299.50 26.27,298.83M28.47,293.50 28.47,300.50M28.47,293.50 32.56,293.50M28.47,296.83 30.99,296.83M28.47,300.50 32.56,300.50M38.86,295.17 38.55,294.50 37.92,293.83 37.29,293.50 36.03,293.50 35.40,293.83 34.77,294.50 34.45,295.17 34.14,296.17 34.14,297.83 34.45,298.83 34.77,299.50 35.40,300.17 36.03,300.50 37.29,300.50 37.92,300.17 38.55,299.50 38.86,298.83M41.07,293.50 41.07,300.50M41.07,293.50 43.91,293.50 44.85,293.83 45.16,294.17 45.48,294.83 45.48,295.50 45.16,296.17 44.85,296.50 43.91,296.83 41.07,296.83M43.27,296.83 45.48,300.50M49.26,293.50 46.74,300.50M49.26,293.50 51.78,300.50M47.68,298.17 50.84,298.17M53.35,293.50 53.35,300.50M53.35,293.50 57.45,293.50M53.35,296.83 55.88,296.83M60.28,293.50 60.28,300.50M58.08,293.50 62.49,293.50M69.11,293.50 69.11,300.50M69.11,293.50 71.94,293.50 72.89,293.83 73.20,294.17 73.52,294.83 73.52,295.50 73.20,296.17 72.89,296.50 71.94,296.83 69.11,296.83M71.31,296.83 73.52,300.50M77.30,293.50 76.67,293.83 76.04,294.50 75.72,295.17 75.41,296.17 75.41,297.83 75.72,298.83 76.04,299.50 76.67,300.17 77.30,300.50 78.56,300.50 79.19,300.17 79.82,299.50 80.13,298.83 80.45,297.83 80.45,296.17 80.13,295.17 79.82,294.50 79.19,293.83 78.56,293.50 77.30,293.50M82.65,293.50 82.65,300.50M82.65,300.50 86.43,300.50M88.01,293.50 88.01,300.50M88.01,300.50 91.79,300.50" fill="none" stroke="#c01428" stroke-width="1.0" stroke-linecap="square" stroke-linejoin="miter" shape-rendering="crispEdges"/>
<path d="M5.84,305.50 4.58,305.93 3.74,307.21 3.32,309.36 3.32,310.64 3.74,312.79 4.58,314.07 5.84,314.50 6.68,314.50 7.94,314.07 8.78,312.79 9.20,310.64 9.20,309.36 8.78,307.21 7.94,305.93 6.68,305.50 5.84,305.50" fill="none" stroke="#000" stroke-width="1.0" stroke-linecap="square" stroke-linejoin="miter" shape-rendering="crispEdges"/>
<path d="M3.27,325.50 3.27,332.50M3.27,325.50 5.47,325.50 6.42,325.83 7.05,326.50 7.37,327.17 7.68,328.17 7.68,329.83 7.37,330.83 7.05,331.50 6.42,332.17 5.47,332.50 3.27,332.50M11.46,325.50 8.94,332.50M11.46,325.50 13.98,332.50M9.88,330.17 13.04,330.17M16.81,325.50 16.81,332.50M14.61,325.50 19.02,325.50M22.17,325.50 19.65,332.50M22.17,325.50 24.69,332.50M20.59,330.17 23.74,330.17M31.30,325.50 31.30,332.50M31.30,325.50 33.83,332.50M36.34,325.50 33.83,332.50M36.34,325.50 36.34,332.50M38.86,325.50 38.86,332.50M41.38,325.50 41.38,332.50M41.38,325.50 45.80,332.50M45.80,325.50 45.80,332.50" fill="none" stroke="#c01428" stroke-width="1.0" stroke-linecap="square" stroke-linejoin="miter" shape-rendering="crispEdges"/>
<path d="M5.84,337.50 4.58,337.93 3.74,339.21 3.32,341.36 3.32,342.64 3.74,344.79 4.58,346.07 5.84,346.50 6.68,346.50 7.94,346.07 8.78,344.79 9.20,342.64 9.20,341.36 8.78,339.21 7.94,337.93 6.68,337.50 5.84,337.50" fill="none" stroke="#000" stroke-width="1.0" stroke-linecap="square" stroke-linejoin="miter" shape-rendering="crispEdges"/>
<path d="M3.27,357.50 3.27,364.50M3.27,357.50 5.47,357.50 6.42,357.83 7.05,358.50 7.37,359.17 7.68,360.17 7.68,361.83 7.37,362.83 7.05,363.50 6.42,364.17 5.47,364.50 3.27,364.50M11.46,357.50 8.94,364.50M11.46,357.50 13.98,364.50M9.88,362.17 13.04,362.17M16.81,357.50 16.81,364.50M14.61,357.50 19.02,357.50M22.17,357.50 19.65,364.50M22.17,357.50 24.69,364.50M20.59,362.17 23.74,362.17M31.30,357.50 31.30,364.50M31.30,357.50 33.83,364.50M36.34,357.50 33.83,364.50M36.34,357.50 36.34,364.50M40.44,357.50 37.92,364.50M40.44,357.50 42.96,364.50M38.86,362.17 42.02,362.17M44.22,357.50 48.63,364.50M48.63,357.50 44.22,364.50" fill="none" stroke="#c01428" stroke-width="1.0" stroke-linecap="square" stroke-linejoin="miter" shape-rendering="crispEdges"/>
<path d="M4.58,371.21 5.42,370.79 6.68,369.50 6.68,378.50M12.56,377.64 12.14,378.07 12.56,378.50 12.98,378.07 12.56,377.64M17.18,371.21 18.02,370.79 19.28,369.50 19.28,378.50M26.84,369.50 25.58,369.93 24.74,371.21 24.32,373.36 24.32,374.64 24.74,376.79 25.58,378.07 26.84,378.50 27.68,378.50 28.94,378.07 29.78,376.79 30.20,374.64 30.20,373.36 29.78,371.21 28.94,369.93 27.68,369.50 26.84,369.50M33.14,369.50 33.14,378.50M33.14,369.50 38.60,369.50M33.14,373.79 36.50,373.79M33.14,378.50 38.60,378.50M41.12,374.64 48.68,374.64M54.14,369.50 52.88,369.93 52.04,371.21 51.62,373.36 51.62,374.64 52.04,376.79 52.88,378.07 54.14,378.50 54.98,378.50 56.24,378.07 57.08,376.79 57.50,374.64 57.50,373.36 57.08,371.21 56.24,369.93 54.98,369.50 54.14,369.50M62.12,369.50 60.86,369.93 60.44,370.79 60.44,371.64 60.86,372.50 61.70,372.93 63.38,373.36 64.64,373.79 65.48,374.64 65.90,375.50 65.90,376.79 65.48,377.64 65.06,378.07 63.80,378.50 62.12,378.50 60.86,378.07 60.44,377.64 60.02,376.79 60.02,375.50 60.44,374.64 61.28,373.79 62.54,373.36 64.22,372.93 65.06,372.50 65.48,371.64 65.48,370.79 65.06,369.93 63.80,369.50 62.12,369.50" fill="none" stroke="#000" stroke-width="1.0" stroke-linecap="square" stroke-linejoin="miter" shape-rendering="crispEdges"/>
<path d="M3.27,389.50 3.27,396.50M3.27,389.50 5.47,389.50 6.42,389.83 7.05,390.50 7.37,391.17 7.68,392.17 7.68,393.83 7.37,394.83 7.05,395.50 6.42,396.17 5.47,396.50 3.27,396.50M9.88,389.50 9.88,396.50M16.50,390.50 15.87,389.83 14.93,389.50 13.66,389.50 12.72,389.83 12.09,390.50 12.09,391.17 12.40,391.83 12.72,392.17 13.35,392.50 15.24,393.17 15.87,393.50 16.19,393.83 16.50,394.50 16.50,395.50 15.87,396.17 14.93,396.50 13.66,396.50 12.72,396.17 12.09,395.50M18.70,389.50 18.70,396.50M18.70,389.50 21.54,389.50 22.48,389.83 22.80,390.17 23.12,390.83 23.12,391.83 22.80,392.50 22.48,392.83 21.54,393.17 18.70,393.17M30.36,389.50 30.36,396.50M30.36,389.50 32.88,396.50M35.40,389.50 32.88,396.50M35.40,389.50 35.40,396.50M37.92,389.50 37.92,396.50M40.44,389.50 40.44,396.50M40.44,389.50 44.85,396.50M44.85,389.50 44.85,396.50" fill="none" stroke="#c01428" stroke-width="1.0" stroke-linecap="square" stroke-linejoin="miter" shape-rendering="crispEdges"/>
<path d="M5.84,401.50 4.58,401.93 3.74,403.21 3.32,405.36 3.32,406.64 3.74,408.79 4.58,410.07 5.84,410.50 6.68,410.50 7.94,410.07 8.78,408.79 9.20,406.64 9.20,405.36 8.78,403.21 7.94,401.93 6.68,401.50 5.84,401.50" fill="none" stroke="#000" stroke-width="1.0" stroke-linecap="square" stroke-linejoin="miter" shape-rendering="crispEdges"/>
<path d="M3.27,421.50 3.27,428.50M3.27,421.50 5.47,421.50 6.42,421.83 7.05,422.50 7.37,423.17 7.68,424.17 7.68,425.83 7.37,426.83 7.05,427.50 6.42,428.17 5.47,428.50 3.27,428.50M9.88,421.50 9.88,428.50M16.50,422.50 15.87,421.83 14.93,421.50 13.66,421.50 12.72,421.83 12.09,422.50 12.09,423.17 12.40,423.83 12.72,424.17 13.35,424.50 15.24,425.17 15.87,425.50 16.19,425.83 16.50,426.50 16.50,427.50 15.87,428.17 14.93,428.50 13.66,428.50 12.72,428.17 12.09,427.50M18.70,421.50 18.70,428.50M18.70,421.50 21.54,421.50 22.48,421.83 22.80,422.17 23.12,422.83 23.12,423.83 22.80,424.50 22.48,424.83 21.54,425.17 18.70,425.17M30.36,421.50 30.36,428.50M30.36,421.50 32.88,428.50M35.40,421.50 32.88,428.50M35.40,421.50 35.40,428.50M39.49,421.50 36.98,428.50M39.49,421.50 42.02,428.50M37.92,426.17 41.07,426.17M43.27,421.50 47.68,428.50M47.68,421.50 43.27,428.50" fill="none" stroke="#c01428" stroke-width="1.0" stroke-linecap="square" stroke-linejoin="miter" shape-rendering="crispEdges"/>
<path d="M4.58,435.21 5.42,434.79 6.68,433.50 6.68,442.50M12.56,441.64 12.14,442.07 12.56,442.50 12.98,442.07 12.56,441.64M18.44,433.50 17.18,433.93 16.34,435.21 15.92,437.36 15.92,438.64 16.34,440.79 17.18,442.07 18.44,442.50 19.28,442.50 20.54,442.07 21.38,440.79 21.80,438.64 21.80,437.36 21.38,435.21 20.54,433.93 19.28,433.50 18.44,433.50M26.84,433.50 25.58,433.93 24.74,435.21 24.32,437.36 24.32,438.64 24.74,440.79 25.58,442.07 26.84,442.50 27.68,442.50 28.94,442.07 29.78,440.79 30.20,438.64 30.20,437.36 29.78,435.21 28.94,433.93 27.68,433.50 26.84,433.50M33.14,433.50 33.14,442.50M33.14,433.50 38.60,433.50M33.14,437.79 36.50,437.79M33.14,442.50 38.60,442.50M41.12,438.64 48.68,438.64M54.14,433.50 52.88,433.93 52.04,435.21 51.62,437.36 51.62,438.64 52.04,440.79 52.88,442.07 54.14,442.50 54.98,442.50 56.24,442.07 57.08,440.79 57.50,438.64 57.50,437.36 57.08,435.21 56.24,433.93 54.98,433.50 54.14,433.50M62.12,433.50 60.86,433.93 60.44,434.79 60.44,435.64 60.86,436.50 61.70,436.93 63.38,437.36 64.64,437.79 65.48,438.64 65.90,439.50 65.90,440.79 65.48,441.64 65.06,442.07 63.80,442.50 62.12,442.50 60.86,442.07 60.44,441.64 60.02,440.79 60.02,439.50 60.44,438.64 61.28,437.79 62.54,437.36 64.22,436.93 65.06,436.50 65.48,435.64 65.48,434.79 65.06,433.93 63.80,433.50 62.12,433.50" fill="none" stroke="#000" stroke-width="1.0" stroke-linecap="square" stroke-linejoin="miter" shape-rendering="crispEdges"/>
<path d="M258.50,460.50 258.50,472.50M267.34,460.50 267.34,472.50M258.50,466.21 267.34,466.21M275.55,460.50 270.50,472.50M275.55,460.50 280.60,472.50M272.39,468.50 278.71,468.50M286.91,460.50 285.65,461.07 284.39,462.21 283.76,463.36 283.13,465.07 283.13,467.93 283.76,469.64 284.39,470.79 285.65,471.93 286.91,472.50 289.44,472.50 290.70,471.93 291.97,470.79 292.60,469.64 293.23,467.93 293.23,465.07 292.60,463.36 291.97,462.21 290.70,461.07 289.44,460.50 286.91,460.50M326.06,462.21 324.80,461.07 322.91,460.50 320.38,460.50 318.49,461.07 317.22,462.21 317.22,463.36 317.86,464.50 318.49,465.07 319.75,465.64 323.54,466.79 324.80,467.36 325.43,467.93 326.06,469.07 326.06,470.79 324.80,471.93 322.91,472.50 320.38,472.50 318.49,471.93 317.22,470.79M330.48,460.50 330.48,472.50M330.48,460.50 335.54,472.50M340.59,460.50 335.54,472.50M340.59,460.50 340.59,472.50M345.64,460.50 345.64,472.50M345.64,460.50 350.69,472.50M355.74,460.50 350.69,472.50M355.74,460.50 355.74,472.50M379.74,463.36 379.10,462.21 377.84,461.07 376.58,460.50 374.05,460.50 372.79,461.07 371.53,462.21 370.90,463.36 370.26,465.07 370.26,467.93 370.90,469.64 371.53,470.79 372.79,471.93 374.05,472.50 376.58,472.50 377.84,471.93 379.10,470.79 379.74,469.64M386.68,464.50 385.42,465.07 384.16,466.21 383.52,467.93 383.52,469.07 384.16,470.79 385.42,471.93 386.68,472.50 388.58,472.50 389.84,471.93 391.10,470.79 391.73,469.07 391.73,467.93 391.10,466.21 389.84,465.07 388.58,464.50 386.68,464.50M396.15,464.50 396.15,472.50M396.15,467.93 396.78,466.21 398.05,465.07 399.31,464.50 401.20,464.50M406.89,464.50 405.62,465.07 404.36,466.21 403.73,467.93 403.73,469.07 404.36,470.79 405.62,471.93 406.89,472.50 408.78,472.50 410.04,471.93 411.31,470.79 411.94,469.07 411.94,467.93 411.31,466.21 410.04,465.07 408.78,464.50 406.89,464.50M416.36,464.50 416.36,472.50M416.36,466.79 418.25,465.07 419.52,464.50 421.41,464.50 422.67,465.07 423.30,466.79 423.30,472.50M435.30,464.50 435.30,472.50M435.30,466.21 434.04,465.07 432.78,464.50 430.88,464.50 429.62,465.07 428.36,466.21 427.72,467.93 427.72,469.07 428.36,470.79 429.62,471.93 430.88,472.50 432.78,472.50 434.04,471.93 435.30,470.79M447.30,464.50 447.30,473.64 446.67,475.36 446.04,475.93 444.77,476.50 442.88,476.50 441.62,475.93M447.30,466.21 446.04,465.07 444.77,464.50 442.88,464.50 441.62,465.07 440.35,466.21 439.72,467.93 439.72,469.07 440.35,470.79 441.62,471.93 442.88,472.50 444.77,472.50 446.04,471.93 447.30,470.79M452.35,464.50 452.35,472.50M452.35,467.93 452.98,466.21 454.25,465.07 455.51,464.50 457.40,464.50M467.51,464.50 467.51,472.50M467.51,466.21 466.24,465.07 464.98,464.50 463.09,464.50 461.82,465.07 460.56,466.21 459.93,467.93 459.93,469.07 460.56,470.79 461.82,471.93 463.09,472.50 464.98,472.50 466.24,471.93 467.51,470.79M472.56,464.50 472.56,476.50M472.56,466.21 473.82,465.07 475.08,464.50 476.98,464.50 478.24,465.07 479.50,466.21 480.13,467.93 480.13,469.07 479.50,470.79 478.24,471.93 476.98,472.50 475.08,472.50 473.82,471.93 472.56,470.79M484.55,460.50 484.55,472.50M484.55,466.79 486.45,465.07 487.71,464.50 489.61,464.50 490.87,465.07 491.50,466.79 491.50,472.50" fill="none" stroke="#c01428" stroke-width="1.0" stroke-linecap="square" stroke-linejoin="miter" shape-rendering="crispEdges"/>
<path d="M87.21,503.50 86.36,503.83 85.79,504.83 85.50,506.50 85.50,507.50 85.79,509.17 86.36,510.17 87.21,510.50 87.79,510.50 88.64,510.17 89.21,509.17 89.50,507.50 89.50,506.50 89.21,504.83 88.64,503.83 87.79,503.50 87.21,503.50" fill="none" stroke="#000" stroke-width="1.0" stroke-linecap="square" stroke-linejoin="miter" shape-rendering="crispEdges"/>
<path d="M212.82,504.50 212.50,503.83 211.55,503.50 210.91,503.50 209.95,503.83 209.32,504.83 209.00,506.50 209.00,508.17 209.32,509.50 209.95,510.17 210.91,510.50 211.23,510.50 212.18,510.17 212.82,509.50 213.14,508.50 213.14,508.17 212.82,507.17 212.18,506.50 211.23,506.17 210.91,506.17 209.95,506.50 209.32,507.17 209.00,508.17M215.68,503.50 219.18,503.50 217.27,506.17 218.23,506.17 218.86,506.50 219.18,506.83 219.50,507.83 219.50,508.50 219.18,509.50 218.55,510.17 217.59,510.50 216.64,510.50 215.68,510.17 215.36,509.83 215.05,509.17" fill="none" stroke="#000" stroke-width="1.0" stroke-linecap="square" stroke-linejoin="miter" shape-rendering="crispEdges"/>
<path d="M335.50,504.83 336.13,504.50 337.07,503.50 337.07,510.50M341.15,505.17 341.15,504.83 341.46,504.17 341.77,503.83 342.40,503.50 343.66,503.50 344.28,503.83 344.60,504.17 344.91,504.83 344.91,505.50 344.60,506.17 343.97,507.17 340.83,510.50 345.23,510.50M351.50,503.50 348.36,510.50M347.11,503.50 351.50,503.50" fill="none" stroke="#000" stroke-width="1.0" stroke-linecap="square" stroke-linejoin="miter" shape-rendering="crispEdges"/>
<path d="M463.50,504.83 464.17,504.50 465.17,503.50 465.17,510.50M473.50,505.83 473.17,506.83 472.50,507.50 471.50,507.83 471.17,507.83 470.17,507.50 469.50,506.83 469.17,505.83 469.17,505.50 469.50,504.50 470.17,503.83 471.17,503.50 471.50,503.50 472.50,503.83 473.17,504.50 473.50,505.83 473.50,507.50 473.17,509.17 472.50,510.17 471.50,510.50 470.83,510.50 469.83,510.17 469.50,509.50M476.83,504.83 477.50,504.50 478.50,503.50 478.50,510.50" fill="none" stroke="#000" stroke-width="1.0" stroke-linecap="square" stroke-linejoin="miter" shape-rendering="crispEdges"/>
<path d="M581.81,505.17 581.81,504.83 582.11,504.17 582.42,503.83 583.03,503.50 584.25,503.50 584.86,503.83 585.17,504.17 585.47,504.83 585.47,505.50 585.17,506.17 584.56,507.17 581.50,510.50 585.78,510.50M591.28,503.50 588.22,503.50 587.92,506.50 588.22,506.17 589.14,505.83 590.06,505.83 590.97,506.17 591.58,506.83 591.89,507.83 591.89,508.50 591.58,509.50 590.97,510.17 590.06,510.50 589.14,510.50 588.22,510.17 587.92,509.83 587.61,509.17M597.39,503.50 594.33,503.50 594.03,506.50 594.33,506.17 595.25,505.83 596.17,505.83 597.08,506.17 597.69,506.83 598.00,507.83 598.00,508.50 597.69,509.50 597.08,510.17 596.17,510.50 595.25,510.50 594.33,510.17 594.03,509.83 593.72,509.17" fill="none" stroke="#000" stroke-width="1.0" stroke-linecap="square" stroke-linejoin="miter" shape-rendering="crispEdges"/>
</svg></body></html>
